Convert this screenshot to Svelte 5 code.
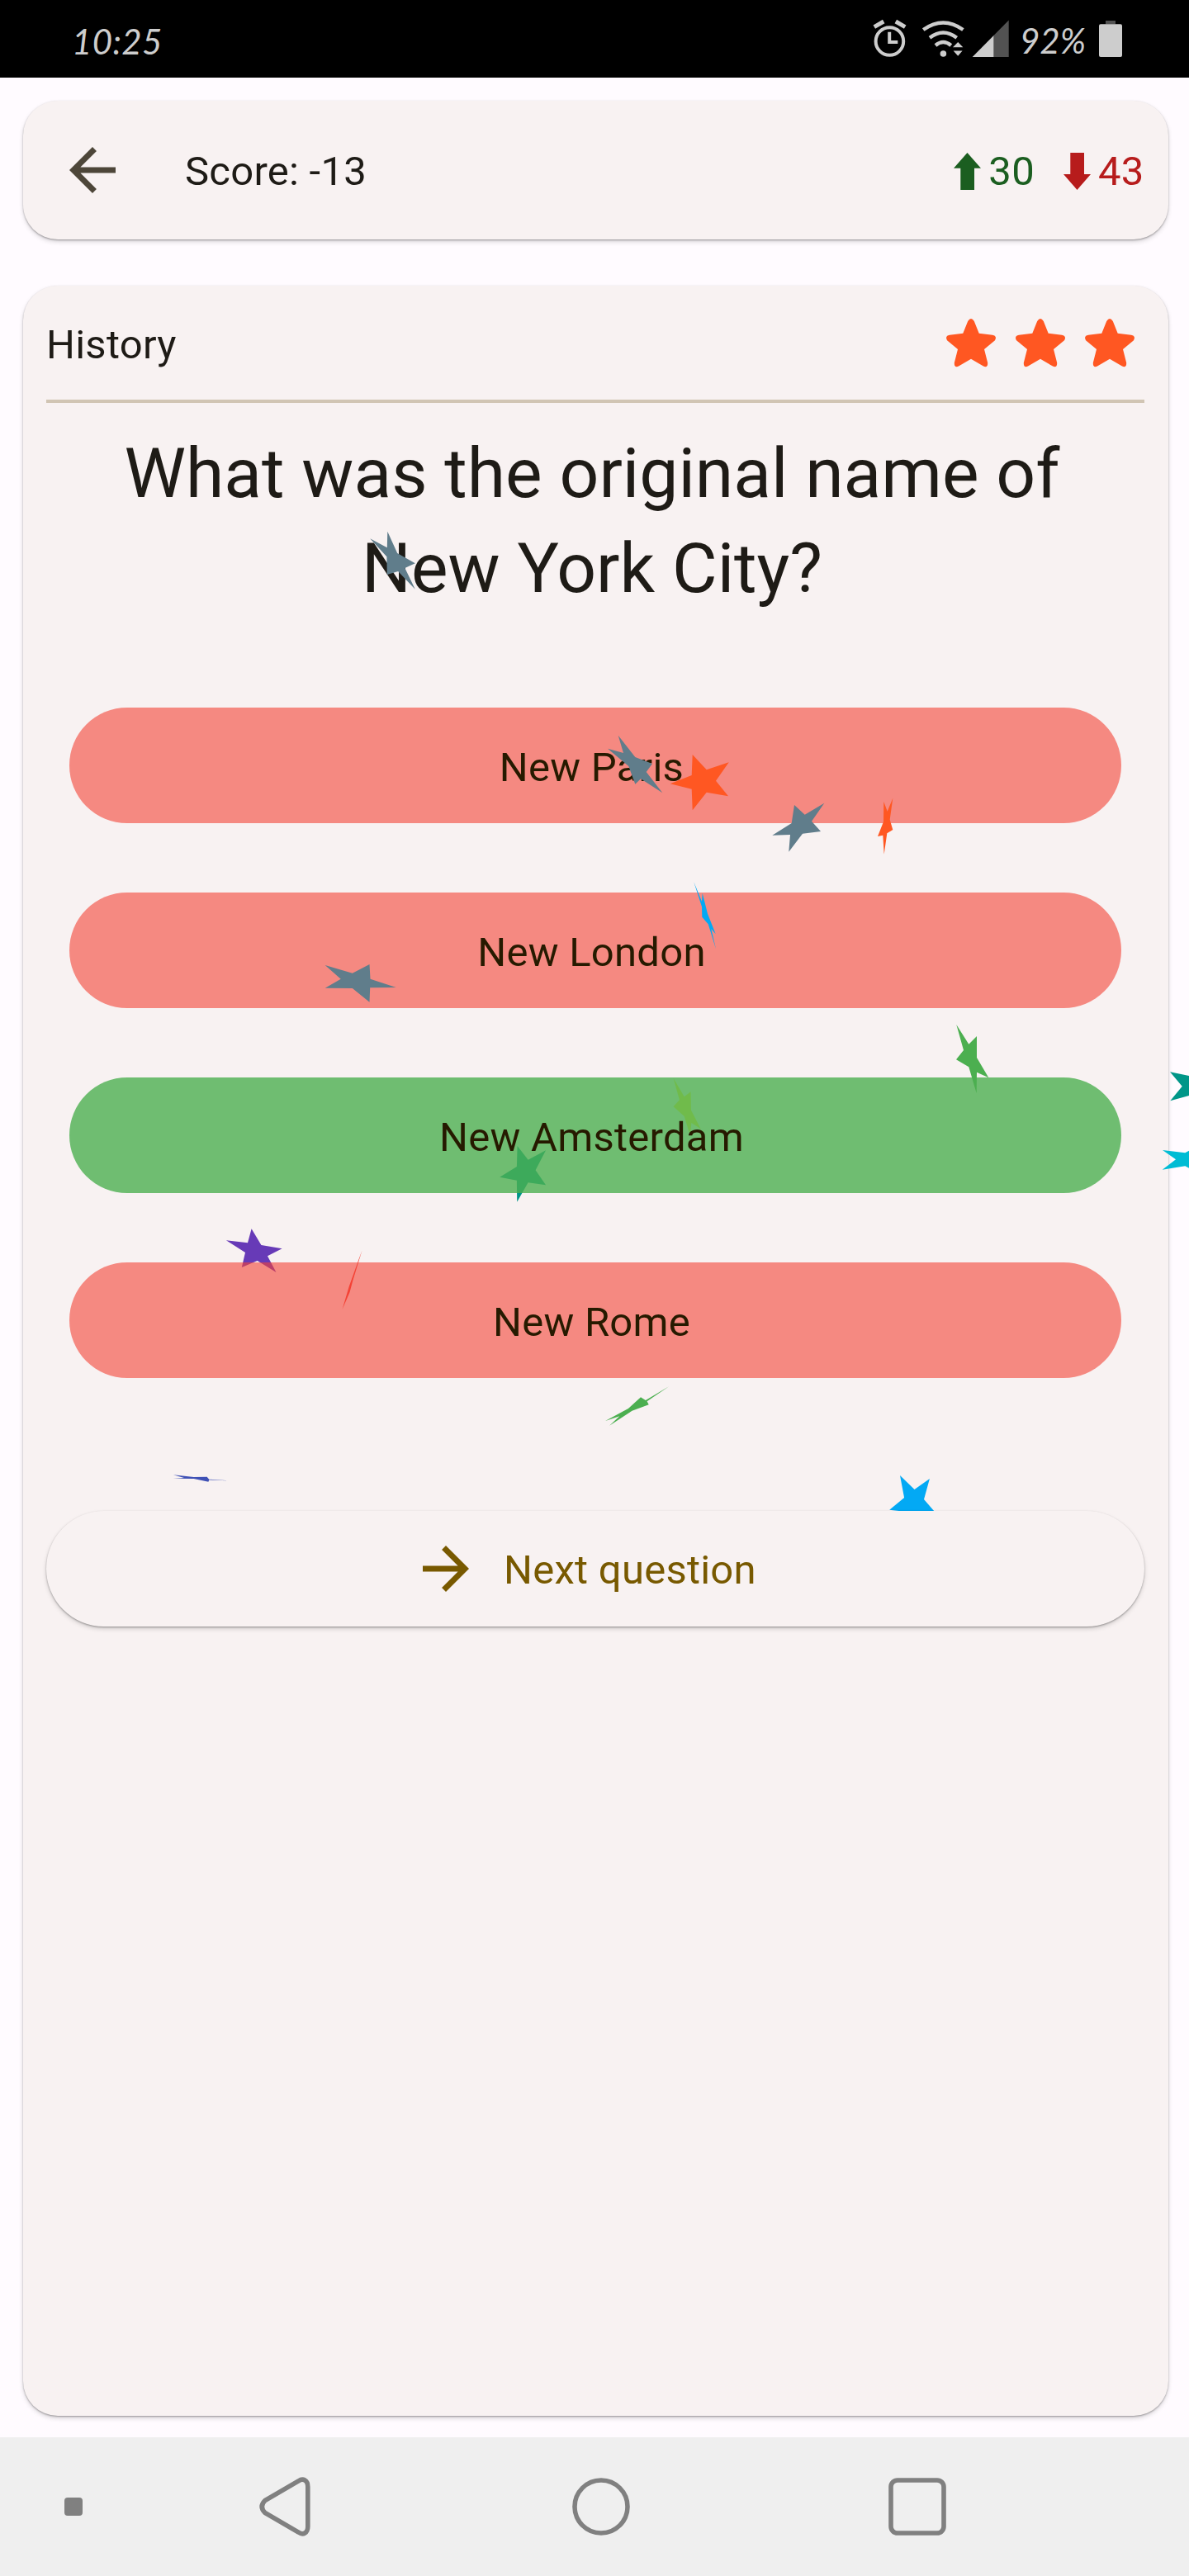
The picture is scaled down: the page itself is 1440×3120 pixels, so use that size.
<script>
  const answers = [
    { text: 'New Paris', correct: false },
    { text: 'New London', correct: false },
    { text: 'New Amsterdam', correct: true },
    { text: 'New Rome', correct: false }
  ];

  const stars = [1, 2, 3];

  // Confetti that falls behind the buttons
  const backConfetti = [
    { color: '#ffeb3b', points: '815.6,1306 828.7,1328.3 836.6,1322.3 837,1344.7 848.7,1367.3 837.3,1360 836,1376 828.7,1352 815.6,1340.3 822.9,1332.3' },
    { color: '#009688', points: '626.6,1388 639.6,1404.7 661,1393.3 648.6,1417.3 661,1435.3 639.6,1432.3 626.2,1455.7 625.9,1429.7 605.2,1425.7 625.9,1413' },
    { color: '#4caf50', points: '1158.3,1241 1173.3,1264.7 1183,1255 1183,1281 1197.3,1305.3 1183,1298.7 1182.7,1324.3 1173.3,1292.3 1158,1283.3 1167,1272' },
    { color: '#009688', points: '1417,1298.3 1440,1303 1440,1327 1417.3,1333.3 1431.7,1315.7' },
    { color: '#00bcd4', points: '1408,1393 1435.3,1396.3 1440,1393.7 1440,1414.7 1435.3,1412.3 1407.7,1416.7 1424,1404.3' },
    { color: '#673ab7', points: '304.6,1488.3 316.4,1508 341.6,1512.3 324,1521.3 334.5,1541 311.7,1527 292.8,1535 297,1517 273.9,1502.3 300,1505.3' },
    { color: '#f44336', points: '438.4,1514.7 427.4,1550.7 423.6,1565 414.5,1586 422.8,1558 433.9,1527' },
    { color: '#4caf50', points: '776,1692.3 781.9,1696 810.1,1679.3 783.6,1697.3 785.7,1701.3 765.5,1708.7 738.1,1726.7 750.3,1715.3 733.1,1721 760.9,1706' },
    { color: '#3f51b5', points: '209.9,1786.3 234.7,1789 250.7,1788.7 253.2,1791.7 276.8,1793.3 253.2,1792.5 252.4,1794.7 234.7,1791 209.9,1790.7 222.9,1790' },
    { color: '#03a9f4', points: '1090,1787 1107.5,1804 1125.9,1791 1119,1816 1132,1831 1107,1838 1088.7,1830 1077.2,1828.7 1095.1,1814' }
  ];

  // Confetti that falls in front of the question and the first answers
  const frontConfetti = [
    { color: '#607d8b', points: '469.3,643.7 481.2,670 502.8,682.3 490.4,688 502.8,713.7 482.1,692 468.8,696 468.4,674.3 448.2,652.3 468.8,663.3' },
    { color: '#607d8b', points: '748.7,890.7 769.3,917 790,925 782.7,935 802.3,960.3 776,943.3 769.3,949.7 761.3,928 736,906.7 755,912' },
    { color: '#ff5722', points: '838.7,914 855.7,932.3 882.7,923.3 867,945.7 882,964.3 855.7,959.7 838.7,981.3 837.7,955.7 811.7,949.3 837.7,939' },
    { color: '#607d8b', points: '962,975 974.7,986.7 998.3,972.7 983,994.7 994,1007 972,1009.7 955.3,1031.7 957,1011 935.3,1011.7 958.7,997' },
    { color: '#ff5722', points: '1070.3,971 1074.7,982.7 1081.3,966.7 1077.7,992.7 1081.3,1005 1074.3,1009.3 1070.7,1034.7 1069.3,1011.7 1063,1013 1070,995.3' },
    { color: '#03a9f4', points: '840.3,1068.3 850,1092 850.7,1081.7 857,1106.7 866.7,1131.3 861.3,1125 867,1149.3 857.7,1119.3 850.3,1110.7 850,1098.3' },
    { color: '#607d8b', points: '393.7,1169 426.8,1178.7 447.5,1168 448.5,1185.7 479.8,1196 448.2,1196.3 447.5,1213.7 426.8,1197 393.7,1196.7 412.7,1185.7' }
  ];
</script>

{#snippet confetti(pieces, layer)}
  <svg class="confetti {layer}" viewBox="0 0 1440 3120" aria-hidden="true">
    {#each pieces as piece}
      <polygon points={piece.points} fill={piece.color} />
    {/each}
  </svg>
{/snippet}

<div class="screen">
  <header class="status">
    <span class="clock">10:25</span>
    <svg class="status-icons" viewBox="1050 0 180 94">
      <g fill="none" stroke="#cdcdcd" stroke-width="4">
        <circle cx="1077.4" cy="50" r="16.8" />
        <path d="M1077.2 38.7V51H1087.3" />
        <path d="M1058.8 32.7L1070.2 26M1084.8 26L1096.2 32.7" stroke-width="5" />
        <path d="M1118.2 36Q1142.3 19 1166.4 36M1126 45.7Q1142.3 33.3 1158.7 45.7M1133 55Q1142.3 47 1151.8 55" stroke-width="4.4" />
      </g>
      <g fill="#cdcdcd">
        <circle cx="1142.4" cy="65" r="3.8" />
        <path d="M1154 57.2L1160.2 51L1166.3 57.2ZM1154.6 61.4H1165.6L1160.2 67.7Z" />
        <path d="M1177.7 69L1203.7 42.7V69Z" />
      </g>
      <path d="M1203.7 42.7L1221.7 24.5V69H1203.7Z" fill="#525252" />
    </svg>
    <span class="charge">92%</span>
    <svg class="battery" viewBox="0 0 28 94">
      <path d="M8 25H20V29.3H8Z" fill="#525252" />
      <rect x="0" y="29.3" width="28" height="39.7" rx="2" fill="#cdcdcd" />
    </svg>
  </header>

  <main class="content">
    <section class="card score-card">
      <svg class="icon back" viewBox="0 0 24 24"><path d="M20 11H7.83l5.59-5.59L12 4l-8 8 8 8 1.41-1.41L7.83 13H20v-2z" /></svg>
      <span class="score">Score: -13</span>
      <span class="tally up">
        <svg viewBox="0 0 33 45"><path d="M16.5 0L33 18.7H25V45H8.3V18.7H0Z" /></svg>30
      </span>
      <span class="tally down">
        <svg viewBox="0 0 33 45"><path d="M16.5 45L33 26H25V0H8.3V26H0Z" /></svg>43
      </span>
    </section>

    <section class="card quiz-card">
      <div class="topic">
        <span class="category">History</span>
        <div class="stars">
          {#each stars as star (star)}
            <svg viewBox="0 0 84 84"><path d="M32.3 31.7L38.2 17Q42 11 45.8 17L51.7 31.7L68 33.8Q74 35 71 40.3L58 51L62.2 67.5Q62.3 74 57 71.6L42 62.7L27 71.6Q21.7 74 21.8 67.5L26 51L13 40.3Q10 35 16 33.8Z" /></svg>
          {/each}
        </div>
      </div>

      <h1>What was the original name of New York City?</h1>

      <div class="answers">
        {#each answers as answer}
          <button class="answer" class:correct={answer.correct}>{answer.text}</button>
        {/each}
      </div>

      <button class="next">
        <svg class="icon" viewBox="0 0 24 24"><path d="M12 4l-1.41 1.41L16.17 11H4v2h12.17l-5.58 5.59L12 20l8-8z" /></svg>
        <span>Next question</span>
      </button>
    </section>
  </main>

  <footer class="nav">
    <span class="dot"></span>
    <svg class="nav-back" viewBox="0 0 70 76"><path d="M62.8 14C62.8 6 57 3 51.5 7L11 30.5Q3.5 38 11 45.5L51.5 69C57 73 62.8 70 62.8 62Z" /></svg>
    <svg class="nav-home" viewBox="0 0 70 76"><circle cx="35" cy="38" r="32" /></svg>
    <svg class="nav-recent" viewBox="0 0 70 76"><rect x="3" y="6" width="64" height="64" rx="8" /></svg>
  </footer>

  {@render confetti(backConfetti, 'behind')}
  {@render confetti(frontConfetti, 'front')}
</div>

<style>
  :global(body) {
    margin: 0;
  }

  .screen {
    position: relative;
    display: flex;
    flex-direction: column;
    width: 1440px;
    height: 3120px;
    overflow: hidden;
    background: #fffbff;
    color: #1e1b16;
    font-family: Roboto, sans-serif;
    font-size: 49px;
    letter-spacing: 0.25px;
  }

  svg {
    display: block;
    flex: none;
  }

  .status {
    display: flex;
    align-items: center;
    box-sizing: border-box;
    height: 94px;
    padding: 0 81px 0 87px;
    background: #000;
    color: #cdcdcd;
    font-family: Lato, sans-serif;
    font-size: 42px;
    font-style: italic;
    letter-spacing: 0.4px;
  }

  .clock {
    flex: 1;
    padding-top: 5px;
  }

  .status-icons {
    width: 180px;
    height: 94px;
  }

  .charge {
    width: 101px;
    padding-top: 4px;
    letter-spacing: 0;
    text-indent: 5px;
  }

  .battery {
    width: 28px;
    height: 94px;
  }

  .content {
    display: flex;
    flex: 1;
    flex-direction: column;
    gap: 56px;
    padding: 28px 25.5px 26px 28px;
  }

  .card {
    box-sizing: border-box;
    border-radius: 42px;
    background: #f8f2f2;
    box-shadow: 0 1px 2px rgba(0, 0, 0, 0.3), 0 3px 6px -1px rgba(0, 0, 0, 0.2);
  }

  .score-card {
    display: flex;
    align-items: center;
    height: 168px;
    padding: 0 29px 0 42px;
  }

  .icon {
    width: 84px;
    height: 84px;
    fill: currentColor;
  }

  .back {
    color: #4d4639;
  }

  .score {
    flex: 1;
    padding: 2px 0 0 70px;
  }

  .tally {
    display: flex;
    align-items: center;
    gap: 9px;
    padding-top: 2px;
  }

  .tally svg {
    width: 33px;
    height: 45px;
    fill: currentColor;
  }

  .up {
    color: #1b5e20;
  }

  .down {
    margin-left: 35px;
    color: #b71c1c;
  }

  .quiz-card {
    display: flex;
    flex: 1;
    flex-direction: column;
    padding: 26px 28.5px 0 28px;
  }

  .topic {
    display: flex;
    align-items: center;
    justify-content: space-between;
    height: 84px;
    padding-bottom: 28px;
    border-bottom: 4px solid #d1c5b4;
  }

  .category {
    padding-top: 6px;
  }

  .stars {
    display: flex;
  }

  .stars svg {
    width: 84px;
    height: 84px;
    fill: #ff5722;
  }

  h1 {
    margin: 28px 0 111px;
    padding: 0 84px 0 76px;
    font-size: 84px;
    font-weight: 400;
    line-height: 115px;
    letter-spacing: 0;
    text-align: center;
  }

  .answers {
    display: flex;
    position: relative;
    z-index: 2;
    flex-direction: column;
    gap: 84px;
    padding: 0 28px;
  }

  button {
    display: flex;
    align-items: center;
    justify-content: center;
    box-sizing: border-box;
    height: 140px;
    border: 0;
    border-radius: 70px;
    font: inherit;
    letter-spacing: inherit;
  }

  .answer {
    padding: 4px 9px 0 0;
    background: rgba(244, 67, 54, 0.6);
    color: #261a00;
  }

  .correct {
    background: rgba(76, 175, 80, 0.8);
  }

  .next {
    position: relative;
    z-index: 2;
    gap: 28px;
    margin-top: 161px;
    padding: 0 28px 0 0;
    background: #f8f2f2;
    box-shadow: 0 1px 2px rgba(0, 0, 0, 0.3), 0 3px 6px -1px rgba(0, 0, 0, 0.2);
    color: #785900;
  }

  .next span {
    padding-top: 2px;
  }

  .nav {
    display: flex;
    align-items: center;
    box-sizing: border-box;
    height: 168px;
    padding-left: 78px;
    background: #efefef;
  }

  .nav svg {
    width: 70px;
    height: 76px;
    fill: none;
    stroke: #808080;
    stroke-width: 5.6;
  }

  .dot {
    width: 22px;
    height: 22px;
    border-radius: 4px;
    background: #808080;
  }

  .nav-back {
    margin-left: 210px;
  }

  .nav-home {
    margin-left: 313px;
  }

  .nav-recent {
    margin-left: 313px;
  }

  .confetti {
    position: absolute;
    top: 0;
    left: 0;
    width: 1440px;
    height: 3120px;
    pointer-events: none;
  }

  .behind {
    z-index: 1;
  }

  .front {
    z-index: 3;
  }
</style>
